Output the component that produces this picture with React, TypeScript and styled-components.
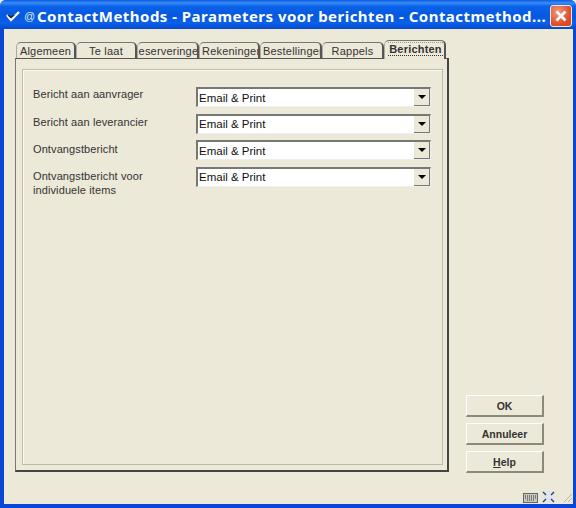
import React from "react";
import styled, { createGlobalStyle } from "styled-components";

const Global = createGlobalStyle`
  html, body { margin: 0; padding: 0; background: #ece9d8; }
  #root { width: 576px; height: 508px; }
  * { box-sizing: border-box; }
`;

const Win = styled.div`
  width: 576px;
  height: 508px;
  display: flex;
  flex-direction: column;
  overflow: hidden;
  font-family: "Liberation Sans", Arial, sans-serif;
  font-size: 11px;
  color: #222;
  background: #0a46d8;
  border-radius: 6px 6px 0 0;
`;

const TitleBar = styled.div`
  height: 29px;
  flex: none;
  display: flex;
  align-items: center;
  padding: 3px 4px 0 6px;
  background: linear-gradient(180deg, #0a5ae0 0%, #3a8cf8 10%, #0a62e8 22%, #0558e0 55%, #0a60ea 80%, #0748cc 100%);
  color: #fff;
`;

const AppIcon = styled.svg`
  width: 14px;
  height: 12px;
  flex: none;
`;

const TitleAt = styled.span`
  margin-left: 4px;
  width: 13px;
  flex: none;
  font-size: 11px;
  font-weight: 400;
  color: #dde8ff;
`;

const TitleText = styled.span`
  flex: 1;
  min-width: 0;
  white-space: nowrap;
  font-family: "Noto Sans", sans-serif;
  font-size: 15px;
  font-weight: 700;
  letter-spacing: 0.47px;
`;

const CloseBtn = styled.div`
  width: 22px;
  height: 22px;
  flex: none;
  margin-top: -1px;
  border: 1px solid #f4e4de;
  border-radius: 3px;
  background: radial-gradient(circle at 35% 30%, #f09a80, #dc4a22 70%);
  display: flex;
  align-items: center;
  justify-content: center;
`;

const Client = styled.div`
  flex: 1;
  margin: 0 3px 4px 4px;
  background: #ece9d8;
  display: flex;
  padding: 12px 0 0 11px;
  position: relative;
`;

const TabArea = styled.div`
  width: 434px;
  height: 431px;
  flex: none;
  display: flex;
  flex-direction: column;
`;

const TabRow = styled.div`
  height: 17px;
  flex: none;
  display: flex;
  align-items: flex-end;
  padding-left: 1px;
  position: relative;
  z-index: 1;
`;

const Tab = styled.div<{ $active?: boolean; $w: number; $start?: boolean }>`
  width: ${(p) => p.$w}px;
  height: ${(p) => (p.$active ? 18 : 16)}px;
  flex: none;
  display: flex;
  align-items: center;
  justify-content: ${(p) => (p.$start ? "flex-start" : "center")};
  overflow: hidden;
  white-space: nowrap;
  font-weight: ${(p) => (p.$active ? 700 : 400)};
  font-size: 11px;
  letter-spacing: 0.2px;
  color: #333;
  border-top: 1px solid #777;
  border-left: 1px solid #aaa;
  border-right: 2px solid #555;
  border-radius: 5px 5px 0 0;
  background: #ece9d8;
  ${(p) => p.$start && "padding-left: 2px;"}
  ${(p) => p.$active && "margin-bottom: -1px; height: 19px; padding: 0 0 2px 2px;"}
`;

const ActiveLabel = styled.span`
  border-bottom: 1px dotted #333;
  border-top: 1px dotted #999;
  line-height: 12px;
  padding: 0 1px;
`;

const Panel = styled.div`
  flex: 1;
  border: 1px solid #777;
  border-right: 2px solid #444;
  border-bottom: 2px solid #444;
  border-top: 1px solid #555;
  padding: 10px 5px 5px 6px;
  display: flex;
`;

const Group = styled.div`
  flex: 1;
  border: 1px solid #bdbbaa;
  box-shadow: inset 1px 1px 0 #fbfaf4;
  padding: 17px 11px 0 10px;
  display: flex;
  flex-direction: column;
  gap: 6.5px;
`;

const Row = styled.div`
  display: grid;
  grid-template-columns: 163px 235px;
  height: 20px;
`;

const Label = styled.div<{ $drop: number }>`
  font-size: 11px;
  letter-spacing: 0.1px;
  line-height: 14px;
  color: #333;
  padding-top: ${(p) => p.$drop}px;
  white-space: pre-line;
`;

const Select = styled.div`
  height: 20px;
  background: #fff;
  border-top: 2px solid #777;
  border-left: 2px solid #777;
  border-right: 1px solid #eee;
  border-bottom: 1px solid #eee;
  display: flex;
  align-items: center;
  justify-content: space-between;
  font-size: 11.5px;
  color: #111;
  padding-left: 1px;
`;

const Arrow = styled.div`
  width: 16px;
  height: 17px;
  flex: none;
  background: #ece9d8;
  border-right: 1px solid #777;
  border-bottom: 1px solid #777;
  display: flex;
  align-items: center;
  justify-content: center;
  &::after {
    content: "";
    border-top: 4px solid #000;
    border-left: 4px solid transparent;
    border-right: 4px solid transparent;
  }
`;

const Side = styled.div`
  margin-left: 17px;
  padding-top: 354px;
  display: flex;
  flex-direction: column;
  gap: 6px;
  flex: none;
`;

const Btn = styled.div`
  width: 78px;
  height: 22px;
  display: flex;
  align-items: center;
  justify-content: center;
  font-weight: 700;
  font-size: 10.5px;
  color: #333;
  background: #ece9d8;
  border-top: 1px solid #fff;
  border-left: 1px solid #fff;
  border-right: 2px solid #8a897c;
  border-bottom: 2px solid #8a897c;
`;

const StatusIcons = styled.div`
  position: absolute;
  right: 0;
  bottom: 1px;
  display: flex;
  align-items: flex-end;
  gap: 4px;
`;

const tabs: { t: string; w: number; active?: boolean; start?: boolean }[] = [
  { t: "Algemeen", w: 60 },
  { t: "Te laat", w: 61 },
  { t: "Reserveringen", w: 62 },
  { t: "Rekeningen", w: 61, start: true },
  { t: "Bestellingen", w: 62, start: true },
  { t: "Rappels", w: 62 },
  { t: "Berichten", w: 62, active: true },
];

const rows: [string, number][] = [
  ["Bericht aan aanvrager", 0],
  ["Bericht aan leverancier", 1],
  ["Ontvangstbericht", 2],
  ["Ontvangstbericht voor\nindividuele items", 2],
];

export default function App() {
  return (
    <Win>
      <Global />
      <TitleBar>
        <AppIcon viewBox="0 0 14 12">
          <path d="M1 5l4 5 8-8" fill="none" stroke="#fff" strokeWidth="2.4" />
          <path d="M2 5l3 2.5L8 5" fill="none" stroke="#223" strokeWidth="1.4" />
        </AppIcon>
        <TitleAt>@</TitleAt>
        <TitleText>ContactMethods - Parameters voor berichten - Contactmethod...</TitleText>
        <CloseBtn>
          <svg width="14" height="14" viewBox="0 0 14 14">
            <path d="M2.5 2.5l9 9M11.5 2.5l-9 9" stroke="#fff" strokeWidth="2.6" />
          </svg>
        </CloseBtn>
      </TitleBar>
      <Client>
        <TabArea>
          <TabRow>
            {tabs.map(({ t, w, active, start }) => (
              <Tab key={t} $w={w} $active={active} $start={start}>
                {active ? <ActiveLabel>{t}</ActiveLabel> : t}
              </Tab>
            ))}
          </TabRow>
          <Panel>
            <Group>
              {rows.map(([r, drop]) => (
                <Row key={r}>
                  <Label $drop={drop}>{r}</Label>
                  <Select>
                    Email &amp; Print
                    <Arrow />
                  </Select>
                </Row>
              ))}
            </Group>
          </Panel>
        </TabArea>
        <Side>
          <Btn>OK</Btn>
          <Btn>Annuleer</Btn>
          <Btn>
            <span>
              <u>H</u>elp
            </span>
          </Btn>
        </Side>
        <StatusIcons>
          <svg width="15" height="10" viewBox="0 0 15 10">
            <rect x="0.5" y="0.5" width="14" height="9" fill="#c8c8c0" stroke="#666" />
            <path d="M2 3h11M2 5h11M4 7h7" stroke="#333" strokeDasharray="1 1" />
          </svg>
          <svg width="13" height="12" viewBox="0 0 13 12">
            <rect width="13" height="12" fill="#dfe6ee" />
            <path d="M1 1l3 3M12 1L9 4M1 11l3-3M12 11L9 8" stroke="#345" strokeWidth="1.4" />
          </svg>
          <svg width="12" height="12" viewBox="0 0 12 12" style={{ marginLeft: 2 }}>
            <path d="M11 3L3 11M11 7L7 11" stroke="#b5b3a4" />
          </svg>
        </StatusIcons>
      </Client>
    </Win>
  );
}
